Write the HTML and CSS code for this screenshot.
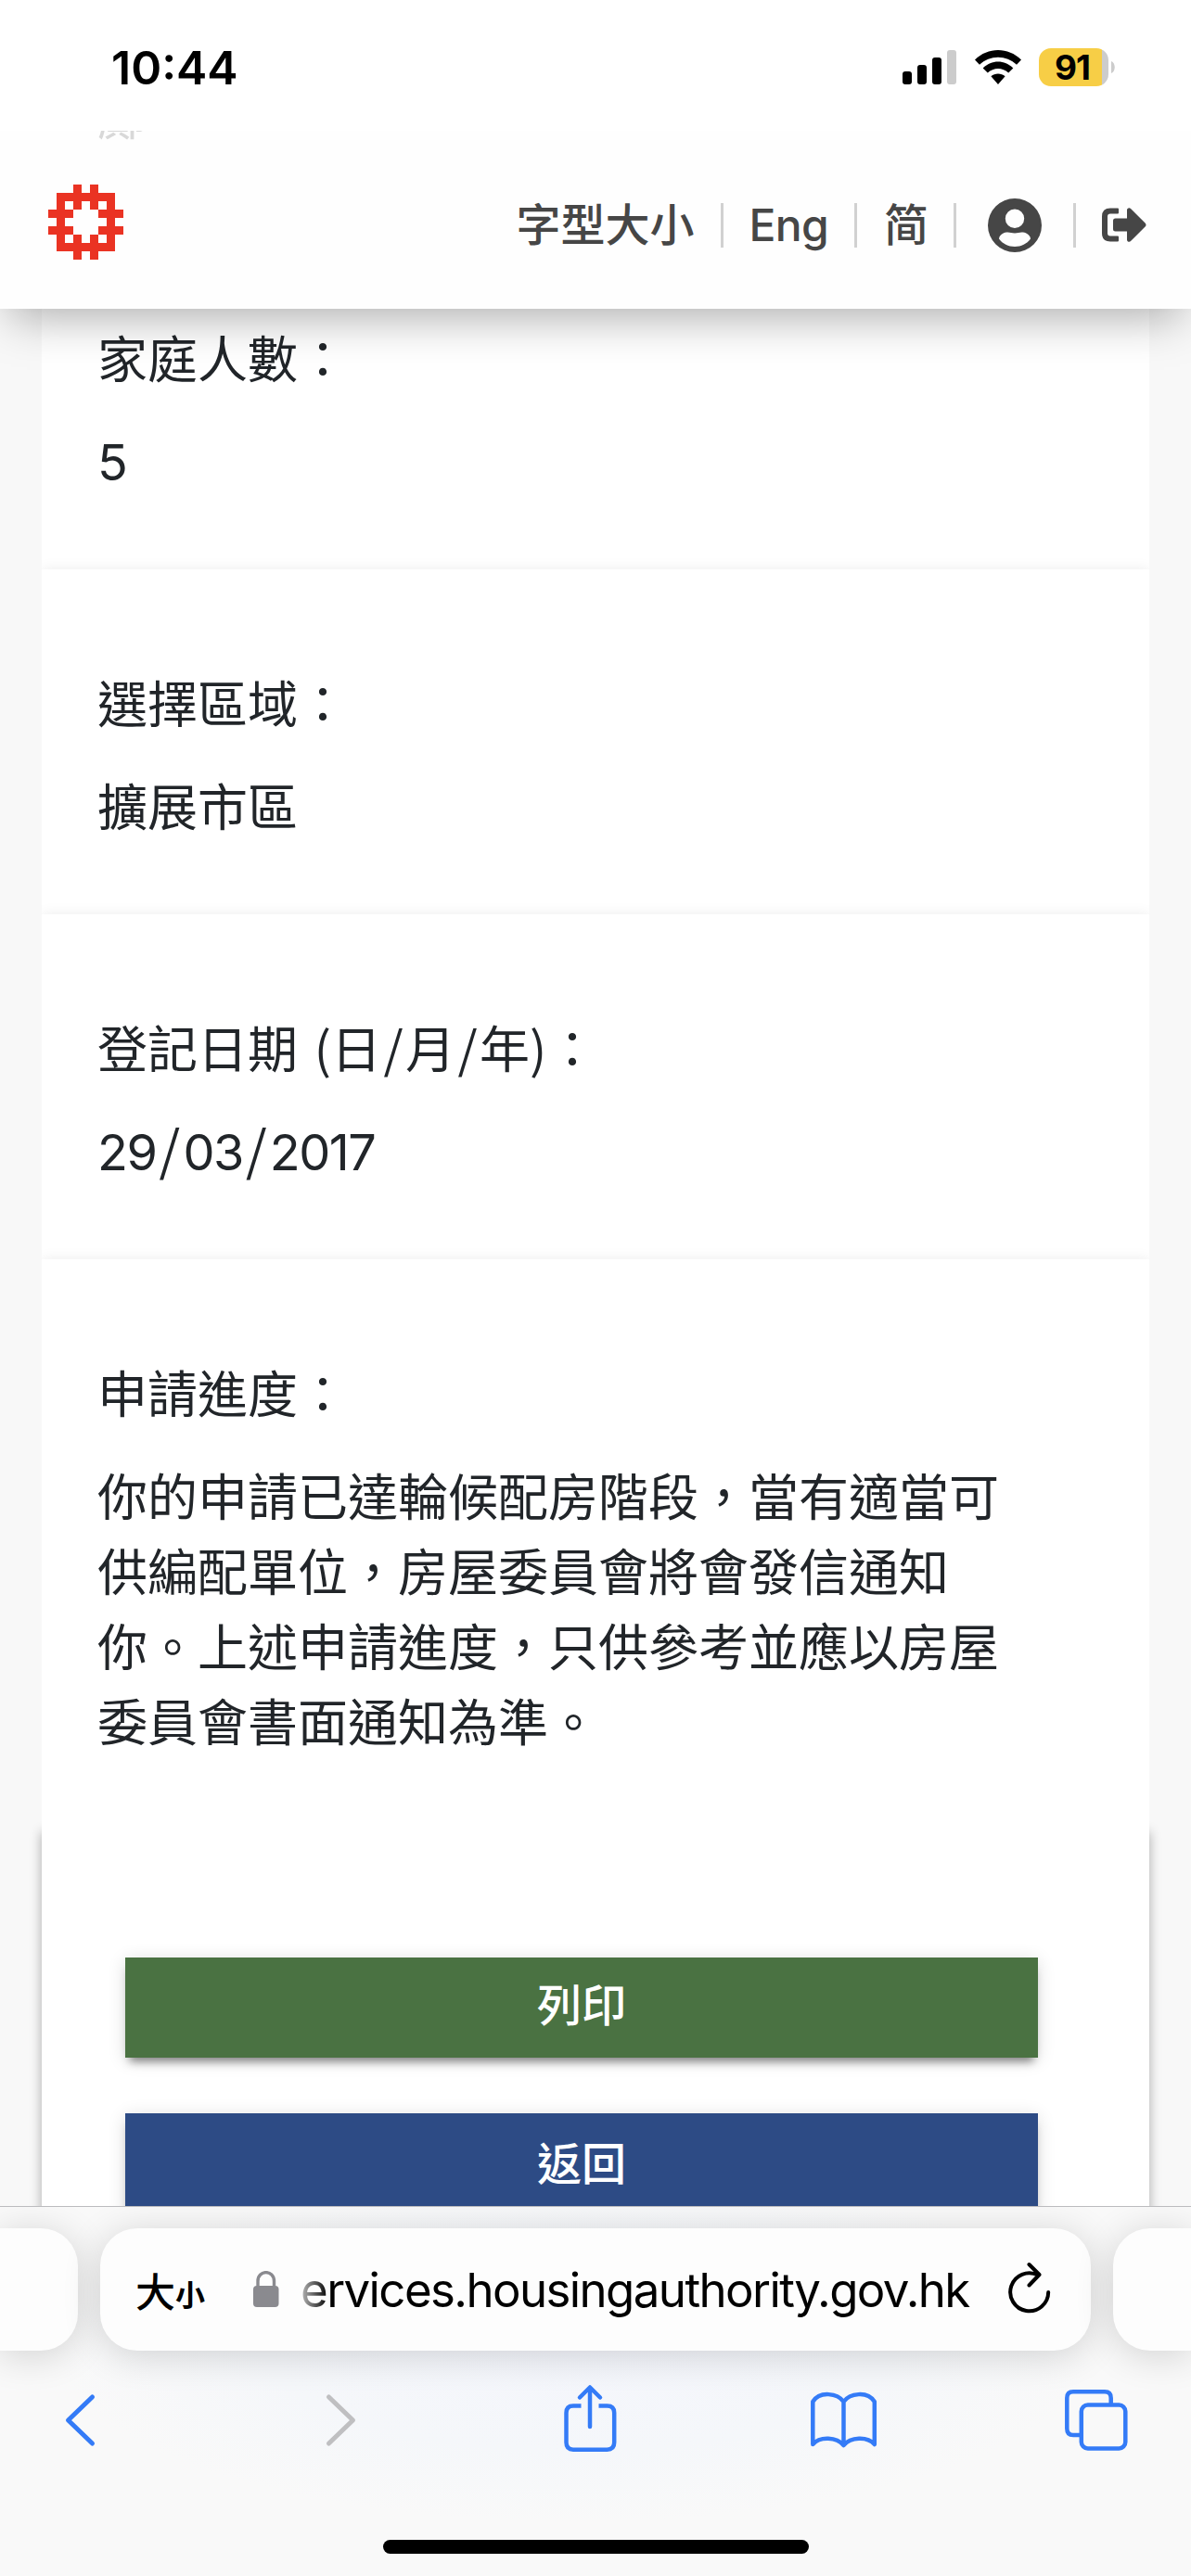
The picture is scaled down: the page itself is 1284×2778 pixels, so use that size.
FILE: index.html
```html
<!DOCTYPE html>
<html lang="zh-Hant-HK">
<head>
<meta charset="utf-8">
<title>申請進度</title>
<link rel="stylesheet" href="styles.css">
</head>
<body>
<div class="phone">
  <div class="statusbar">
    <span class="time">10:44</span>
    <div class="indicators">
      <svg class="signal" width="58" height="37" viewBox="0 0 58 37">
        <rect x="0" y="23" width="10" height="14" rx="3"/>
        <rect x="16" y="16" width="10" height="21" rx="3"/>
        <rect x="32" y="8" width="10" height="29" rx="3"/>
        <rect x="48" y="0" width="10" height="37" rx="3" fill="#ccc"/>
      </svg>
      <svg class="wifi" width="50" height="37" viewBox="0 0 50 37">
        <path d="M0 10.5C14 -3.5 36 -3.5 50 10.5L45 15.7C34 5 16 5 5 15.7ZM8.7 19.4C18 10.2 32 10.2 41.3 19.4L36.2 24.6C29.8 18.6 20.2 18.6 13.8 24.6ZM17.4 28.3C21.8 24.6 28.2 24.6 32.6 28.3L25 37Z"/>
      </svg>
      <div class="battery"><span>91</span></div>
      <svg class="battery-cap" width="4" height="13" viewBox="0 0 4 13"><path d="M0 0C5 2 5 11 0 13Z" fill="#ccc"/></svg>
    </div>
  </div>
  <div class="peek"><span>鄺</span></div>
  <header class="header">
    <svg class="logo" width="81" height="81" viewBox="0 0 9 9" shape-rendering="crispEdges">
      <path fill="#ea3323" fill-rule="evenodd" d="M1 1h7v7h-7zM2 2v1h1v-1zM6 2v1h1v-1zM2 6v1h1v-1zM6 6v1h1v-1zM4 2h1v1h1v1h1v1h-1v1h-1v1h-1v-1h-1v-1h-1v-1h1v-1h1z"/>
      <path fill="#ea3323" d="M3 0h1v1h-1zM5 0h1v1h-1zM0 3h1v1h-1zM0 5h1v1h-1zM8 3h1v1h-1zM8 5h1v1h-1zM3 8h1v1h-1zM5 8h1v1h-1zM2 3h1v1h-1zM2 5h1v1h-1zM6 3h1v1h-1zM6 5h1v1h-1z"/>
    </svg>
    <nav class="nav">
      <span class="nav-item size">字型大小</span><i class="bar"></i>
      <span class="nav-item eng">Eng</span><i class="bar"></i>
      <span class="nav-item simp" lang="zh-Hans">简</span><i class="bar"></i>
      <svg class="user" width="58" height="58" viewBox="0 0 58 58">
        <path fill="#464646" fill-rule="evenodd" d="M29 0a29 29 0 1 1 0 58a29 29 0 0 1 0-58ZM29 11.5a10.2 10.2 0 1 0 0 20.4a10.2 10.2 0 0 0 0-20.4ZM12 43.500C16 49 22 52 29 52S42 49 46 43.500C45.500 39 41 36.500 36.500 36.500C34 36.500 32 37.500 29 37.500S24 36.500 21.500 36.500C17 36.500 12.500 39 12 43.500Z"/>
      </svg><i class="bar"></i>
      <svg class="exit" width="48" height="37" viewBox="0 0 48 37">
        <path fill="#464646" d="M18 1.500V5.500Q18 6.500 17 6.500H9Q6 6.500 6 9.500V27.500Q6 30.500 9 30.500H17Q18 30.500 18 31.500V35.500Q18 36.500 17 36.500H9Q0 36.500 0 27.500V9.500Q0 .5 9 .5H17Q18 .5 18 1.500ZM27 2.500C27 .4 29.500-.6 31 .9L46.800 16.700Q48.200 18.500 46.800 20.300L31 36.100C29.500 37.600 27 36.600 27 34.500V25.500H14.500Q12 25.500 12 23V14Q12 11.500 14.500 11.500H27Z"/>
      </svg>
    </nav>
  </header>
  <main class="content">
    <div class="card">
      <section class="field first"><div class="label">家庭人數：</div><div class="value numeric">5</div></section>
      <section class="field"><div class="label">選擇區域：</div><div class="value">擴展市區</div></section>
      <section class="field"><div class="label">登記日期<span class="paren-open"> (</span>日<span class="slash">/</span>月<span class="slash">/</span>年<span class="paren-close">)</span>：</div><div class="value numeric">29<span class="date-slash">/</span>03<span class="date-slash">/</span>2017</div></section>
      <section class="field"><div class="label">申請進度：</div><div class="value">你的申請已達輪候配房階段，當有適當可<br>供編配單位，房屋委員會將會發信通知<br>你。上述申請進度，只供參考並應以房屋<br>委員會書面通知為準。</div></section>
    </div>
    <div class="actions">
      <div class="button print">列印</div>
      <div class="button back">返回</div>
    </div>
  </main>
  <footer class="browser">
    <div class="tabs">
      <div class="pill side"></div>
      <div class="pill address">
        <span class="aa-big">大</span><span class="aa-small">小</span>
        <svg class="lock" width="28" height="40" viewBox="0 0 28 40"><rect x="0" y="16" width="27.500" height="23" rx="4" fill="#8a8a8f"/><path d="M5 18V11C5-1.500 22.500-1.500 22.500 11V18" fill="none" stroke="#8a8a8f" stroke-width="3.400"/></svg>
        <span class="url">ervices.housingauthority.gov.hk</span>
        <svg class="reload" width="46" height="56" viewBox="0 0 46 56" fill="none" stroke="#000" stroke-width="4" stroke-linecap="round" stroke-linejoin="round"><path d="M32 14.500A20.500 20.500 0 1 0 43.200 33M22.500 3L33.500 14L22.500 25.500"/></svg>
      </div>
      <div class="pill side"></div>
    </div>
    <svg class="toolbar" width="1284" height="76" viewBox="0 2570 1284 76" fill="none" stroke="#347bf7" stroke-width="4.500" stroke-linecap="round" stroke-linejoin="round">
      <path d="M99.500 2585L73.500 2610L99.500 2635" stroke-width="5"/>
      <path d="M354.500 2585L380.500 2610L354.500 2635" stroke="#bfbfc1" stroke-width="5"/>
      <path d="M636 2617V2575M625 2585.500L636 2574.500L647 2585.500"/>
      <path d="M626.500 2594.500H618Q610.500 2594.500 610.500 2602V2634Q610.500 2641.700 618 2641.700H654.500Q662.200 2641.700 662.200 2634V2602Q662.200 2594.500 654.500 2594.500H645.500" stroke-linecap="butt"/>
      <path d="M909.500 2590C903 2581 884 2578 876.300 2590V2636C884 2627 902 2628 909.500 2637C917 2628 935 2627 942.800 2636V2590C935 2578 916 2581 909.500 2590V2637"/>
      <path d="M1164 2626H1157Q1150.300 2626 1150.300 2619V2586Q1150.300 2579.300 1157 2579.300H1191Q1197.700 2579.300 1197.700 2586V2592"/>
      <rect x="1165.800" y="2593.500" width="47.500" height="47" rx="7"/>
    </svg>
    <div class="home"></div>
  </footer>
</div>
</body>
</html>
```
FILE: styles.css
```css
* { box-sizing: border-box; }
body { margin: 0; background: #f8f8f8; font-family: "Inter", "Noto Sans CJK TC", sans-serif; }
.phone { width: 1284px; height: 2778px; display: flex; flex-direction: column; overflow: hidden; }

.statusbar { height: 141px; flex: none; background: #fff; display: flex; justify-content: space-between; padding: 0 82px 0 120px; position: relative; z-index: 3; }
.time { font-size: 50px; font-weight: 600; line-height: 60px; margin-top: 43px; letter-spacing: 0; }
.indicators { display: flex; align-items: flex-start; padding-top: 52px; }
.signal, .wifi { margin-top: 2px; }
.wifi { margin-left: 20px; }
.battery { margin-left: 19px; width: 75px; height: 41px; border-radius: 13px; background: linear-gradient(90deg, #f7ce46 68px, #ccc 68px); display: flex; justify-content: center; font-size: 37px; font-weight: 700; line-height: 41px; letter-spacing: -1px; padding-right: 3px; }
.battery-cap { margin-left: 3px; margin-top: 14px; }

.peek { height: 20px; flex: none; background: #fefefe; overflow: hidden; position: relative; z-index: 3; }
.peek span { display: block; margin: -41px 0 0 105px; font-size: 54px; line-height: 54px; color: #d8d8d8; }

.header { height: 172px; flex: none; background: #fefefe; position: relative; z-index: 2; display: flex; justify-content: space-between; padding: 38px 48px 0 52px; box-shadow: 0 20px 48px -12px rgba(0,0,0,.34); }
.logo { flex: none; }
.nav { display: flex; align-items: center; height: 88px; color: #464646; font-size: 48px; font-weight: 500; line-height: 60px; }
.nav-item { white-space: nowrap; }
.bar { width: 3px; height: 48px; background: #d1d1d1; flex: none; }
.size { margin-right: 28px; }
.eng { margin: 0 28px 0 28px; letter-spacing: -0.7px; }
.simp { margin: 0 27px 0 29px; font-family: "Inter", "Noto Sans CJK SC", sans-serif; }
.user { margin: 0 34px; }
.exit { margin-left: 28px; margin-top: -2px; }

.content { height: 2046px; flex: none; overflow: hidden; padding: 0 45px; color: #212529; }
.card { position: relative; z-index: 1; }
.field { background: #fff; padding: 106px 62px 74px 60px; font-size: 54px; line-height: 81px; height: 372px; position: relative; box-shadow: 0 0 14px rgba(0,0,0,.08); clip-path: inset(-16px 0 0 0); }
.field:last-child { height: 615px; }
.field.first { padding-top: 15px; height: 281px; }
.label, .value { white-space: nowrap; height: 81px; }
.value { margin-top: 30px; }
.numeric { margin-top: 29px; letter-spacing: -1.5px; font-weight: 370; }
.paren-open, .paren-close, .slash, .date-slash { display: inline-block; font-family: "Noto Sans CJK TC", sans-serif; line-height: 60px; letter-spacing: 0; }
.paren-open { width: 36px; text-align: right; }
.paren-close { width: 19px; }
.slash { width: 26px; text-align: center; }
.date-slash { font-size: 58px; width: 27px; text-align: center; margin: 0 1px; }
.actions { position: relative; background: #fff; height: 560px; padding: 138px 120px 0 90px; box-shadow: 0 3px 12px rgba(0,0,0,.32); }
.button { height: 108px; color: #fff; font-size: 48px; font-weight: 500; line-height: 104px; text-align: center; box-shadow: 0 9px 9px -5px rgba(0,0,0,.45), 0 3px 18px rgba(0,0,0,.14); }
.print { background: #4a7242; }
.back { background: #2d4b85; margin-top: 60px; line-height: 109px; }

.browser { height: 399px; flex: none; position: relative; z-index: 4; border-top: 1px solid #bcbcbf; background: radial-gradient(ellipse 560px 190px at 620px 150px, #f4f6fc 0, #f5f7fa 60%, #f9f9f9 100%); overflow: hidden; }
.tabs { display: flex; gap: 24px; padding-top: 23px; }
.pill { height: 132px; background: #fdfdfd; box-shadow: 0 5px 40px rgba(0,0,0,.16); }
.side { width: 84px; flex: none; border-radius: 0 40px 40px 0; }
.side:last-child { border-radius: 40px 0 0 40px; }
.address { width: 1068px; flex: none; border-radius: 40px; display: flex; align-items: center; padding-left: 38px; }
.aa-big { font-size: 43px; font-weight: 500; width: 43px; }
.aa-small { font-size: 32px; font-weight: 700; width: 33px; margin-top: 7px; }
.lock { margin-left: 51px; }
.url { margin-left: 23px; margin-top: 2px; font-size: 51px; line-height: 64px; letter-spacing: -1.6px; width: 738px; white-space: nowrap; background: linear-gradient(90deg, #bbb 0, #000 30px); background-clip: text; -webkit-background-clip: text; color: transparent; }
.reload { margin-left: 25px; margin-top: -5px; flex: none; }
.toolbar { display: block; margin-top: 35px; }
.home { width: 459px; height: 15px; border-radius: 8px; background: #000; margin: 93px 0 0 413px; }
```
